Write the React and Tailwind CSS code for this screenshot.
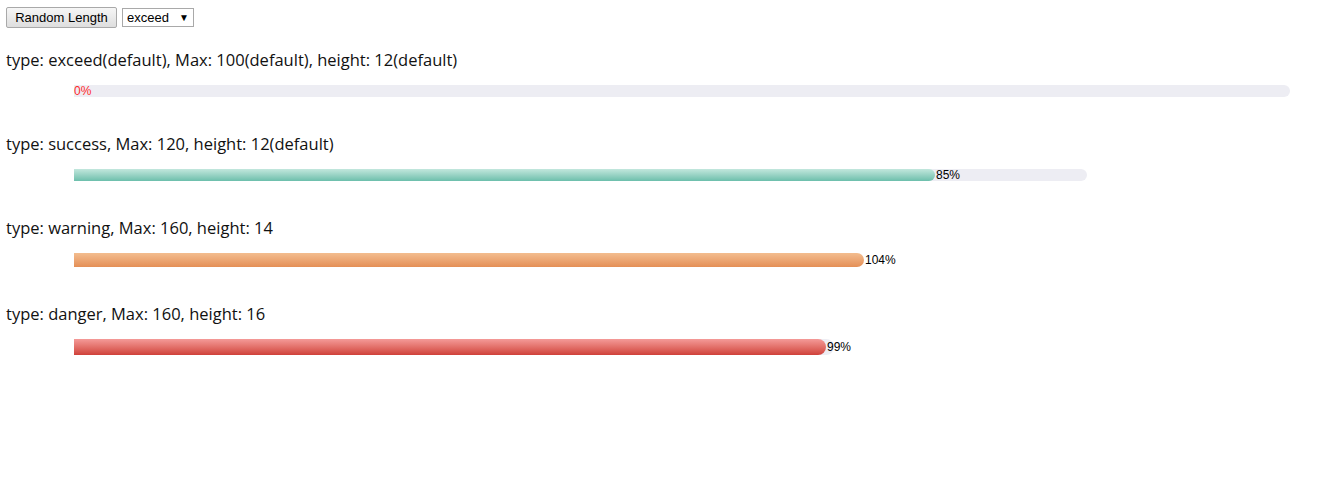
import { useState } from "react";

const BASE_WIDTH = 1216;

const fills = {
  exceed: "bg-gradient-to-b from-[#f7a0a0] to-[#e04a44]",
  success: "bg-gradient-to-b from-[#c2e7dd] to-[#6cbfac]",
  warning: "bg-gradient-to-b from-[#f3bd8f] to-[#e48f56]",
  danger: "bg-gradient-to-b from-[#f49a98] to-[#cf403a]",
};

function ProgressBar({ value, max = 100, height = 12, type = "exceed" }) {
  const trackWidth = Math.round((BASE_WIDTH * 100) / max);
  const fillWidth = Math.round((trackWidth * value) / 100);

  return (
    <div className="pl-[74px]">
      <div
        className="relative rounded-r-full bg-[#ededf3]"
        style={{ width: trackWidth, height }}
      >
        {fillWidth > 0 && (
          <div
            className={`absolute left-0 top-0 h-full rounded-r-full ${fills[type]}`}
            style={{ width: fillWidth }}
          />
        )}
        <span
          className={`absolute top-1/2 -translate-y-1/2 text-[12px] leading-none ${
            value === 0 ? "text-[#ff2a2a]" : "text-black"
          }`}
          style={{ left: fillWidth + (value === 0 ? 0 : 1) }}
        >
          {value}%
        </span>
      </div>
    </div>
  );
}

export default function App() {
  const [mode, setMode] = useState("exceed");
  const [values, setValues] = useState([0, 85, 104, 99]);

  const randomize = () => {
    setValues(values.map(() => Math.floor(Math.random() * 120)));
  };

  const rows = [
    {
      label: "type: exceed(default), Max: 100(default), height: 12(default)",
      props: { type: mode },
    },
    {
      label: "type: success, Max: 120, height: 12(default)",
      props: { type: "success", max: 120 },
    },
    {
      label: "type: warning, Max: 160, height: 14",
      props: { type: "warning", max: 160, height: 14 },
    },
    {
      label: "type: danger, Max: 160, height: 16",
      props: { type: "danger", max: 160, height: 16 },
    },
  ];

  return (
    <div className="min-h-screen bg-white font-['Liberation_Sans',Arial,sans-serif] text-[#111]">
      <div className="flex items-center gap-[5px] pl-[6px] pt-[7px]">
        <button
          onClick={randomize}
          className="h-[21px] w-[111px] rounded-[2px] border border-[#a9a9a9] bg-gradient-to-b from-[#f6f6f6] to-[#dedede] text-[13px] leading-none text-black"
        >
          Random Length
        </button>
        <div className="relative h-[19px] w-[72px] border border-[#a9a9a9] bg-white">
          <select
            value={mode}
            onChange={(e) => setMode(e.target.value)}
            className="block h-[17px] w-full appearance-none bg-transparent py-0 pl-[4px] text-[13px] leading-[17px] text-black outline-none"
          >
            <option value="exceed">exceed</option>
            <option value="success">success</option>
            <option value="warning">warning</option>
            <option value="danger">danger</option>
          </select>
          <span className="pointer-events-none absolute right-[4px] top-1/2 -translate-y-1/2 text-[10px] leading-none text-black">
            ▼
          </span>
        </div>
      </div>

      <div className="pt-[20px]">
        {rows.map((row, i) => (
          <div key={i} className="pb-[35px]">
            <p className="pl-[6px] font-['Open_Sans',sans-serif] text-[16.5px] leading-[24px] text-[#111]">
              {row.label}
            </p>
            <div className="pt-[13px]">
              <ProgressBar value={values[i]} {...row.props} />
            </div>
          </div>
        ))}
      </div>
    </div>
  );
}
